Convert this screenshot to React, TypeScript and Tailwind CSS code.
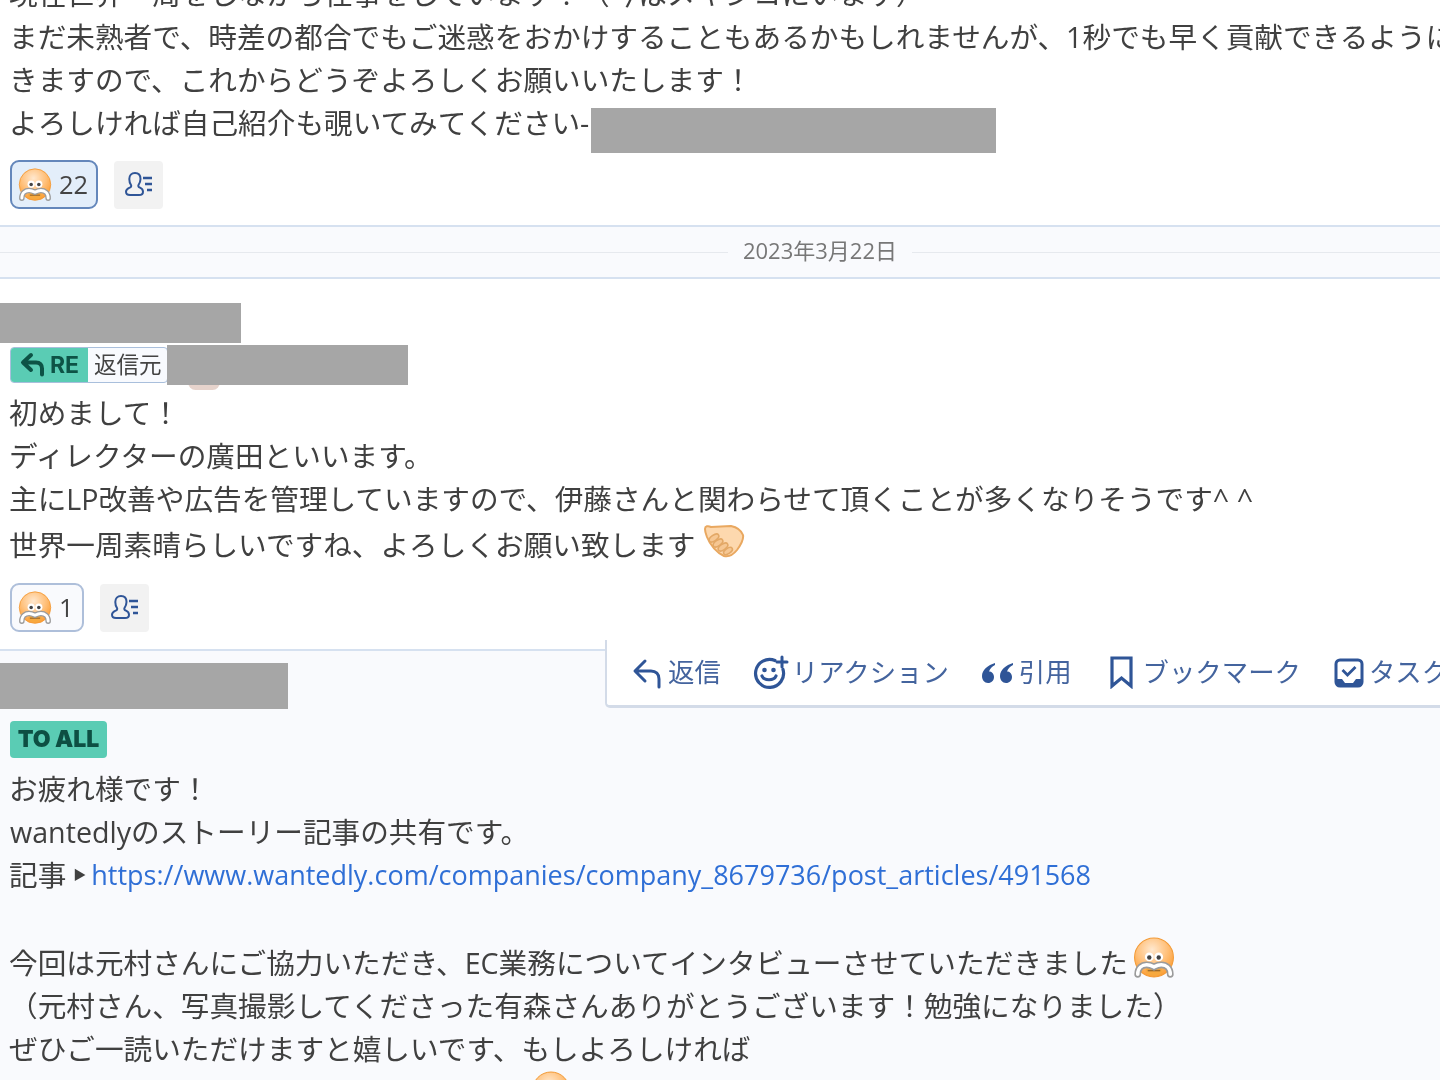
import React from "react";

const FONT = '"Open Sans", "Noto Sans CJK JP", sans-serif';

function Face({ size, className = "" }: { size: number; className?: string }) {
  const id = `f${size}`;
  return (
    <svg width={size} height={size} viewBox="0 0 40 40" className={`inline-block shrink-0 ${className}`}>
      <defs>
        <radialGradient id={id} cx="45%" cy="30%" r="72%">
          <stop offset="0%" stopColor="#ffe8cf" />
          <stop offset="55%" stopColor="#ffc07a" />
          <stop offset="100%" stopColor="#fb9a2e" />
        </radialGradient>
      </defs>
      <circle cx="20" cy="19.500" r="18.500" fill={`url(#${id})`} stroke="#f39a35" strokeWidth="1" />
      <circle cx="15.500" cy="19" r="4.200" fill="#fff" />
      <circle cx="24.500" cy="19" r="4.200" fill="#fff" />
      <circle cx="15.500" cy="19.500" r="2.100" fill="#444" />
      <circle cx="24.500" cy="19.500" r="2.100" fill="#444" />
      <ellipse cx="20" cy="32" rx="8" ry="5" fill="#f7a93f" />
      <path d="M14 32h12" stroke="#9c6a2a" strokeWidth="1.400" />
      <path d="M4.500 35.500C4.500 29 9 26.500 13 26.500c3 0 5 1 7 2 2-1 4-2 7-2 4 0 8.500 2.500 8.500 9" fill="none" stroke="#9b9b9b" strokeWidth="6.500" strokeLinecap="round" />
      <path d="M4.500 35.500C4.500 29 9 26.500 13 26.500c3 0 5 1 7 2 2-1 4-2 7-2 4 0 8.500 2.500 8.500 9" fill="none" stroke="#fff" strokeWidth="3.400" strokeLinecap="round" />
    </svg>
  );
}

function Hands() {
  return (
    <svg width="42" height="36" viewBox="0 0 42 36" className="shrink-0">
      <path d="M2 6C2 3 5 2.500 8 4L28 3C33 4 38 7 40 12 41 17 37 23 34 27 30 32 25 34 21 33 14 30 7 22 4 14 3 11 2 9 2 6z" fill="#fdd8ae" stroke="#e9a860" strokeWidth="2" strokeLinejoin="round" />
      <g fill="#f6c793" stroke="#e3a866" strokeWidth="1.600">
        <ellipse cx="11" cy="15" rx="5.500" ry="2.800" transform="rotate(-35 11 15)" />
        <ellipse cx="15" cy="20" rx="5.500" ry="2.800" transform="rotate(-35 15 20)" />
        <ellipse cx="20" cy="24" rx="5.500" ry="2.800" transform="rotate(-35 20 24)" />
        <ellipse cx="25" cy="28" rx="5" ry="2.600" transform="rotate(-35 25 28)" />
      </g>
    </svg>
  );
}

function UsersIcon() {
  return (
    <svg width="30" height="28" viewBox="0 0 30 28" fill="none" stroke="#2f5597" strokeWidth="2">
      <path d="M11 2c3.600 0 5.500 2.600 5.500 6 0 2.500-1 4.500-2 6-.6 1 0 2 1.500 2.700 1.700.8 3 2 3 4 0 2.500-2 3.300-4 3.300H6c-2.500 0-4-1-4-3.200 0-2.200 1.700-3.400 3.600-4.200 1.500-.7 2-1.600 1.400-2.600-1-1.500-1.700-3.500-1.700-6C5.300 4.600 7.500 2 11 2z" />
      <path d="M19 7h9M21 13h7M23 19h5" strokeWidth="2.600" />
    </svg>
  );
}

function Pill({ n, active, width }: { n: string; active?: boolean; width: string }) {
  return (
    <div className={`flex h-[49px] items-center rounded-[9px] border-2 pl-[6px] ${width} ${active ? "border-[#6487bb] bg-[#e3eefa]" : "border-[#aebfda] bg-[#f9fafd]"}`}>
      <Face size={34} />
      <span className="ml-[7px] text-[25.500px] leading-none text-[#444]">{n}</span>
    </div>
  );
}

function Reactions({ n, active, width }: { n: string; active?: boolean; width: string }) {
  return (
    <div className="flex items-center gap-[16px] pl-[10px]">
      <Pill n={n} active={active} width={width} />
      <div className="flex h-[48px] w-[49px] items-center justify-center rounded-[4px] bg-[#f2f2f2]">
        <UsersIcon />
      </div>
    </div>
  );
}

function Line({ children, h = "h-[43px]" }: { children: React.ReactNode; h?: string }) {
  return <div className={`flex items-center whitespace-nowrap pl-[9px] ${h}`}>{children}</div>;
}

function Tool({ icon, label, className }: { icon: React.ReactNode; label: string; className: string }) {
  return (
    <div className={`flex shrink-0 items-center ${className}`}>
      {icon}
      <span className="whitespace-nowrap">{label}</span>
    </div>
  );
}

const Redact = ({ className }: { className: string }) => <div className={`bg-[#a6a6a6] ${className}`} />;

export default function App() {
  return (
    <div className="relative h-[1080px] w-[1440px] overflow-hidden bg-white text-[28.650px] leading-[43px] text-[#404040] blur-[0.4px]" style={{ fontFamily: FONT }}>
      <div className="-mt-[28px]">
        <Line>現在世界一周をしながら仕事をしています！（今はメキシコにいます）</Line>
        <Line>まだ未熟者で、時差の都合でもご迷惑をおかけすることもあるかもしれませんが、1秒でも早く貢献できるように</Line>
        <Line>きますので、これからどうぞよろしくお願いいたします！</Line>
        <div className="relative">
          <Line>よろしければ自己紹介も覗いてみてください-</Line>
          <Redact className="absolute left-[591px] top-[7px] h-[45px] w-[405px]" />
        </div>
      </div>

      <div className="mt-[16px]">
        <Reactions n="22" active width="w-[88px]" />
      </div>

      <div className="mt-[16px] flex h-[54px] items-center border-y-2 border-[#d6e1f0] bg-[#f9fafd]">
        <div className="h-px flex-1 bg-[#e6e9ee]" />
        <span className="-mt-[4px] px-[15px] text-[22px] text-[#777]">2023年3月22日</span>
        <div className="h-px w-[528px] bg-[#e6e9ee]" />
      </div>

      <Redact className="mt-[24px] h-[40px] w-[241px]" />

      <div className="relative ml-[10px] mt-[4px] flex h-[36px] w-[158px] overflow-hidden rounded-[4px] border border-[#a9bfdc] bg-[#f8fafe]">
        <div className="flex w-[77px] items-center justify-center gap-[2px] bg-[#5accb4] text-[#0d5346]">
          <svg width="28" height="26" viewBox="0 0 28 26" fill="none" stroke="currentColor" strokeWidth="4" strokeLinecap="round" strokeLinejoin="round">
            <path d="M11 3 3 10.500l8 7.500M4 10.500h12c4 0 6 2.500 6 6v6" />
          </svg>
          <span className="font-['Inter'] text-[23px] font-bold leading-none">RE</span>
        </div>
        <span className="pl-[6px] text-[22.500px] leading-[34px] text-[#444]">返信元</span>
      </div>
      <div className="absolute left-[188px] top-[375px] h-[15px] w-[32px] rounded-full bg-[#e6d3cc]" />
      <Redact className="absolute left-[167px] top-[345px] h-[40px] w-[241px]" />

      <div className="mt-[8px]">
        <Line>初めまして！</Line>
        <Line>ディレクターの廣田といいます。</Line>
        <Line>主にLP改善や広告を管理していますので、伊藤さんと関わらせて頂くことが多くなりそうです^ ^</Line>
        <Line h="h-[49px]">
          世界一周素晴らしいですね、よろしくお願い致します
          <span className="-mt-[7px] ml-[7px] flex"><Hands /></span>
        </Line>
      </div>

      <div className="mt-[14px]">
        <Reactions n="1" width="w-[74px]" />
      </div>

      <div className="mt-[17px] h-[500px] border-t-2 border-[#d6e1f0] bg-[#f9fafd]">
        <Redact className="mt-[12px] h-[46px] w-[288px]" />
        <div className="ml-[10px] mt-[12px] flex h-[37px] w-[97px] items-center justify-center rounded-[4px] bg-[#5accb4] font-['Inter'] text-[23px] font-black leading-none text-[#0d4f43]">
          TO ALL
        </div>
        <div className="mt-[8px]">
          <Line h="h-[44px]">お疲れ様です！</Line>
          <Line><span className="ml-[1px]">wantedly</span>のストーリー記事の共有です。</Line>
          <Line>
            記事<span className="ml-[7px] mr-[5px] text-[13px] leading-none">▶</span>
            <span className="text-[27px] text-[#2f6fd6]">https://www.wantedly.com/companies/company_8679736/post_articles/491568</span>
          </Line>
          <Line h="h-[44px]">{"\u00a0"}</Line>
          <Line h="h-[44px]">
            今回は元村さんにご協力いただき、EC業務についてインタビューさせていただきました
            <span className="-mt-[9px] ml-[5px] flex"><Face size={42} /></span>
          </Line>
          <Line>（元村さん、写真撮影してくださった有森さんありがとうございます！勉強になりました）</Line>
          <Line>ぜひご一読いただけますと嬉しいです、もしよろしければ</Line>
          <div className="ml-[531px] -mt-[4px]"><Face size={40} /></div>
        </div>
      </div>

      <div className="absolute left-[605px] top-[640px] flex h-[68px] w-[835px] items-center rounded-bl-[5px] border-b-[3px] border-l-2 border-[#d3dbe8] bg-white pl-[25px] text-[26.400px] text-[#44649e]">
        <Tool
          className="mr-[32px]"
          label="返信"
          icon={
            <svg width="31" height="32" viewBox="0 0 31 32" fill="none" stroke="#2f5597" strokeWidth="3" strokeLinecap="round" strokeLinejoin="round" className="mr-[5px]">
              <path d="M13 4 3 14l10 10M4 14h15c5 0 8 3 8 8v8" />
            </svg>
          }
        />
        <Tool
          className="mr-[32px]"
          label="リアクション"
          icon={
            <svg width="36" height="36" viewBox="0 0 36 36" fill="none" stroke="#2f5597" strokeWidth="3.200" strokeLinecap="round" className="mr-[3px]">
              <path d="M22 5.500a14 14 0 1 0 8 9" />
              <circle cx="11.500" cy="15" r="2.300" fill="#2f5597" stroke="none" />
              <circle cx="20.500" cy="15" r="2.300" fill="#2f5597" stroke="none" />
              <path d="M9 21c2 5 12 5 14 0" />
              <path d="M29 2v10M24 7h10" strokeWidth="3" />
            </svg>
          }
        />
        <Tool
          className="mr-[38px]"
          label="引用"
          icon={
            <svg width="34" height="22" viewBox="0 0 34 22" fill="#2f5597" className="mr-[4px]">
              <path d="M14 1C7 3 1 8 1 14c0 4 2.500 7 6 7s6-2.500 6-6-2.500-5.500-5-5.500C9 6.500 11 4.500 14 3zM32 1c-7 2-13 7-13 13 0 4 2.500 7 6 7s6-2.500 6-6-2.500-5.500-5-5.500c1-3 3-5 6-6.500z" />
            </svg>
          }
        />
        <Tool
          className="mr-[33px]"
          label="ブックマーク"
          icon={
            <svg width="23" height="33" viewBox="0 0 23 33" fill="none" stroke="#2f5597" strokeWidth="3.200" strokeLinejoin="miter" className="mr-[10px]">
              <path d="M2 2h19v28l-9.500-8L2 30z" />
            </svg>
          }
        />
        <Tool
          className=""
          label="タスク"
          icon={
            <svg width="30" height="30" viewBox="0 0 30 30" fill="none" stroke="#2f5597" strokeWidth="3" className="mr-[5px]">
              <rect x="2" y="2" width="26" height="26" rx="4" />
              <path d="M8.500 12l5 5 8-8" strokeWidth="2.800" />
              <path d="M2 21h6l3 4h8l3-4h6v6a1 1 0 0 1-1 1H3a1 1 0 0 1-1-1z" fill="#2f5597" stroke="none" />
            </svg>
          }
        />
      </div>
    </div>
  );
}
